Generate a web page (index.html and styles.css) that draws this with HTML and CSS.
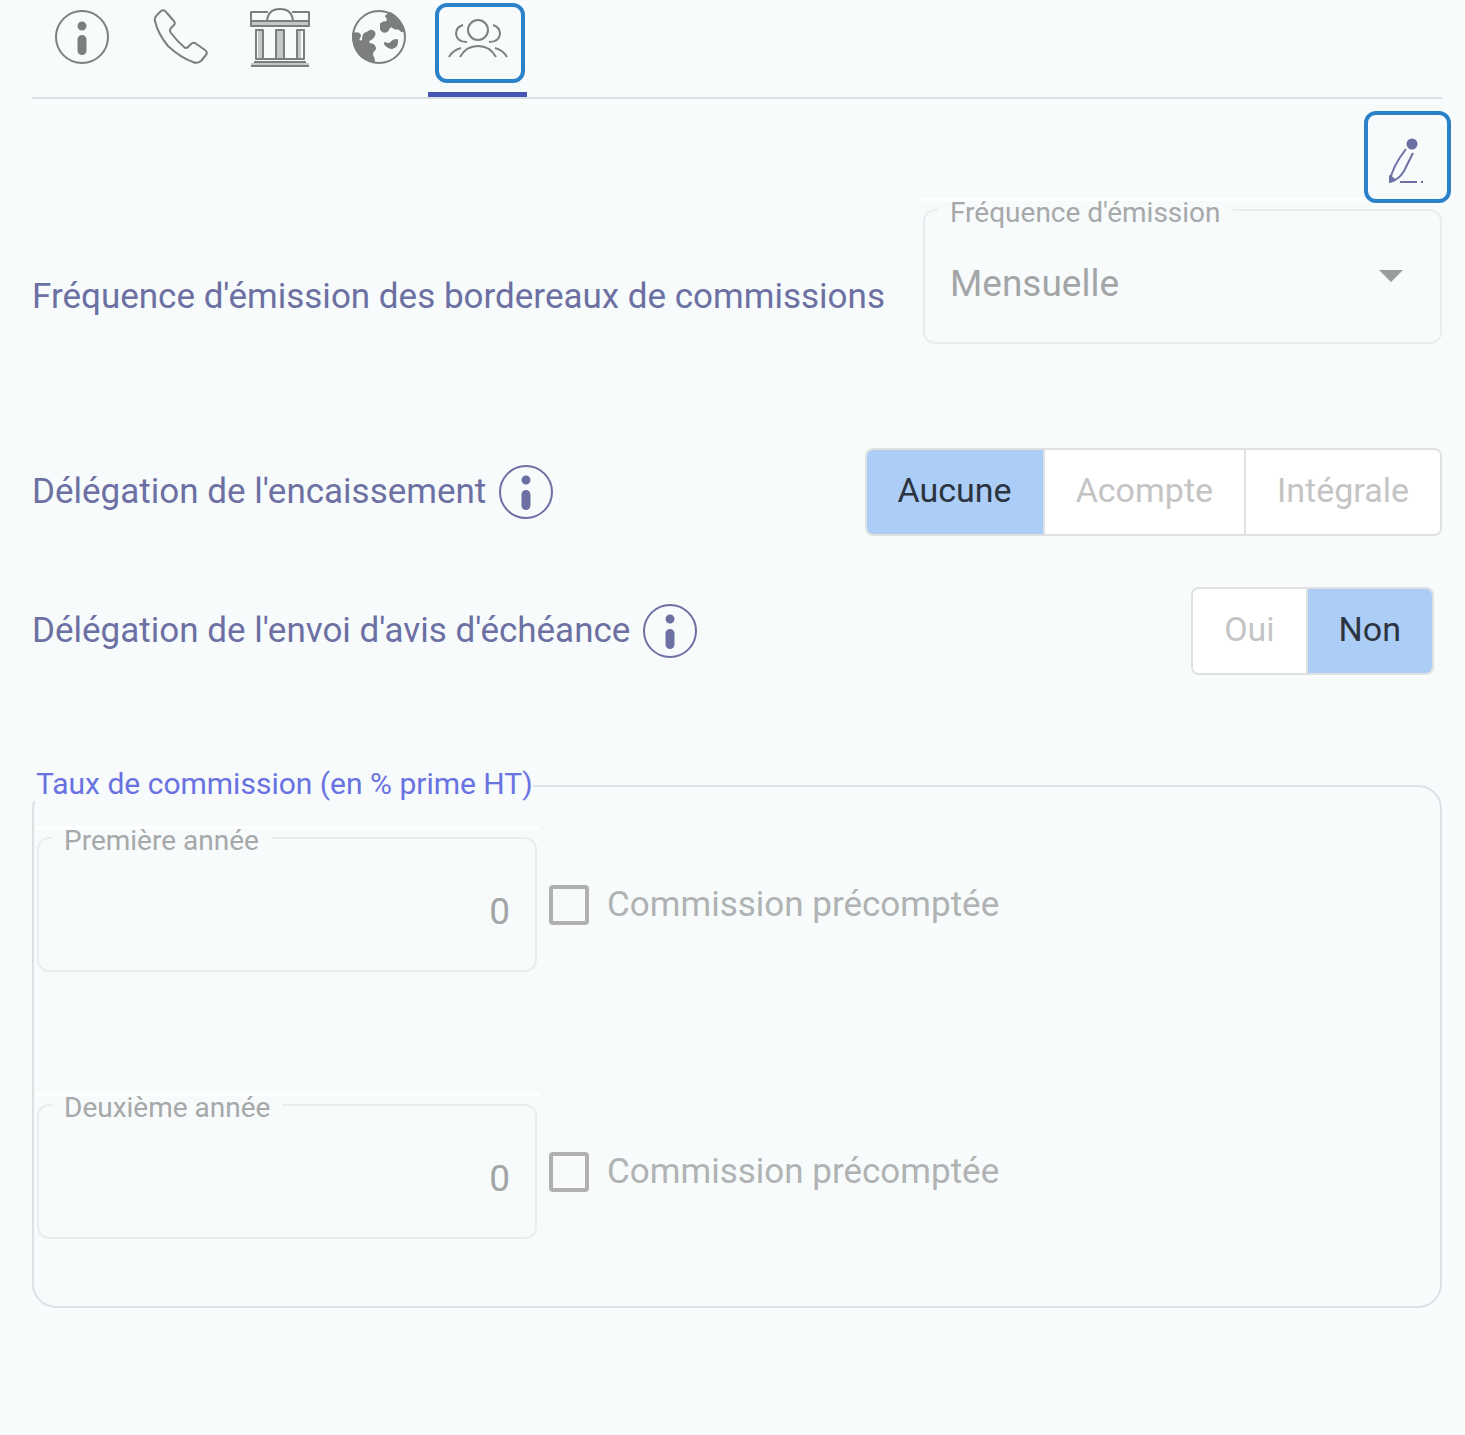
FILE: index.html
```html
<!DOCTYPE html>
<html lang="fr">
<head>
    <meta charset="UTF-8">
    <meta name="viewport" content="width=device-width, initial-scale=1.0">
    <title>Commissions</title>
    <link rel="stylesheet" href="styles.css">
</head>
<body>

    <nav class="tabs">
        <button class="tab" aria-label="Informations">
            <svg class="icon" viewBox="0 0 60 60">
                <circle cx="30" cy="29" r="26"/>
                <circle class="fill" cx="30" cy="18" r="3.5"/>
                <rect class="fill" x="26.5" y="28" width="7" height="18" rx="3.5"/>
            </svg>
        </button>
        <button class="tab" aria-label="Téléphone">
            <svg class="icon" viewBox="0 0 60 60">
                <path d="M4 13Q3 10 6 7L10 3Q13 1 15 4L22 12Q25 15 23 17L20 20Q18 22 20 25Q26 33 33 39Q35 41 37 39L40 36Q42 34 44 35L54 42Q57 44 55 47L50 53Q46 56 42 54Q30 50 17 38Q7 26 4 13Z"/>
            </svg>
        </button>
        <button class="tab" aria-label="Banque">
            <svg class="icon" viewBox="0 0 60 60">
                <path class="shade" d="M8 22h5v29H8zM26 22h8v29h-8zM46 22h5v29h-5zM1 13h58v5H1zM1 55h58v3H1z"/>
                <path d="M18 4H1V18H59V4H42M1 13H59M17 13Q18 1 30 1T43 13M6 22H13V51H6ZM26 22H34V51H26ZM47 22H54V51H47ZM6 51H54M4 54H56M1 58H59"/>
            </svg>
        </button>
        <button class="tab" aria-label="Pays">
            <svg class="icon" viewBox="0 0 60 60">
                <circle cx="30" cy="29" r="26"/>
                <path class="fill" d="M41 5Q51 10 55 23Q52 24 50 20Q47 22 42 18Q40 19 38 23Q34 25 32 21V16Q34 14 38 14Q40 11 37 8ZM36 35Q39 37 42 35Q44 32 48 32Q49 39 43 40Q39 40 36 36ZM4 26Q9 24 11 27Q11 29 9 32Q12 35 14 32Q14 25 18 25Q22 21 25 24Q27 27 22 31Q18 32 20 36Q26 36 26 41Q21 46 24 49Q25 52 25 54Q6 51 4 29Z"/>
            </svg>
        </button>
        <button class="tab active" aria-label="Commissions">
            <svg class="icon" viewBox="0 0 60 60">
                <circle cx="30" cy="22" r="10"/>
                <path d="M12 49Q18 38 30 38T48 49M1 49Q5 42 13 40M59 49Q55 42 47 40M15 17Q8 19 8 26Q9 34 19 34M45 17Q52 19 52 26Q51 34 41 34"/>
            </svg>
        </button>
    </nav>

    <main class="panel">
        <div class="toolbar">
            <button class="edit" aria-label="Modifier">
                <svg viewBox="0 0 48 56">
                    <circle class="fill" cx="28" cy="15" r="4.5"/>
                    <path d="M22 20Q8 38 6 52Q14 52 20 42L29 24M16 53H33M37 53H39"/>
                    <path class="fill" d="M6 47L11 51L6 53Z"/>
                </svg>
            </button>
        </div>

        <div class="row first">
            <span class="text">Fréquence d'émission des bordereaux de commissions</span>
            <fieldset class="field frequency">
                <legend><label for="frequence">Fréquence d'émission</label></legend>
                <select id="frequence" disabled>
                    <option>Mensuelle</option>
                </select>
            </fieldset>
        </div>

        <div class="row collection">
            <span class="text">Délégation de l'encaissement
                <svg class="icon" viewBox="0 0 60 60">
                    <circle cx="30" cy="30" r="26"/>
                    <circle class="fill" cx="30" cy="18" r="3.5"/>
                    <rect class="fill" x="26.5" y="29" width="7" height="18" rx="3.5"/>
                </svg>
            </span>
            <div class="toggle">
                <button class="selected" disabled>Aucune</button>
                <button disabled>Acompte</button>
                <button disabled>Intégrale</button>
            </div>
        </div>

        <div class="row notice">
            <span class="text">Délégation de l'envoi d'avis d'échéance
                <svg class="icon" viewBox="0 0 60 60">
                    <circle cx="30" cy="30" r="26"/>
                    <circle class="fill" cx="30" cy="18" r="3.5"/>
                    <rect class="fill" x="26.5" y="29" width="7" height="18" rx="3.5"/>
                </svg>
            </span>
            <div class="toggle">
                <button disabled>Oui</button>
                <button class="selected" disabled>Non</button>
            </div>
        </div>

        <fieldset class="rates">
            <legend>Taux de commission (en % prime HT)</legend>
            <div class="rate">
                <fieldset class="field">
                    <legend><label for="annee1">Première année</label></legend>
                    <input type="text" id="annee1" value="0" disabled>
                </fieldset>
                <label class="check"><input type="checkbox" disabled>Commission précomptée</label>
            </div>
            <div class="rate">
                <fieldset class="field">
                    <legend><label for="annee2">Deuxième année</label></legend>
                    <input type="text" id="annee2" value="0" disabled>
                </fieldset>
                <label class="check"><input type="checkbox" disabled>Commission précomptée</label>
            </div>
        </fieldset>
    </main>

</body>
</html>
```
FILE: styles.css
```css
*,
*::before,
*::after {
    box-sizing: border-box;
}

body {
    font-family: Roboto, 'Liberation Sans', sans-serif;
    margin: 0;
    padding: 0 23px 0 32px;
    background-color: #f7fbfc;
    color: #6c70a2;
}

button,
input,
select {
    font-family: inherit;
    margin: 0;
}

fieldset {
    margin: 0;
    padding: 0;
    min-width: 0;
}

svg {
    display: block;
    fill: none;
    stroke: currentColor;
    stroke-width: 2;
    stroke-linejoin: round;
}

svg .fill {
    fill: currentColor;
}

svg .shade {
    fill: #c4c7c8;
    stroke: none;
}

.icon {
    width: 60px;
    height: 60px;
    flex: none;
}

/* tabs */
.tabs {
    display: flex;
    border-bottom: 2px solid #dcdfe1;
}

.tab {
    position: relative;
    width: 99px;
    height: 97px;
    padding: 8px 0 24px;
    border: 0;
    border-bottom: 5px solid transparent;
    background: none;
    color: #7c7e7f;
}

.tab .icon {
    margin: 0 auto;
}

.tab.active {
    border-bottom-color: #4453b6;
}

.tab.active::after {
    content: "";
    position: absolute;
    top: 3px;
    left: 7px;
    width: 90px;
    height: 80px;
    border: 4px solid #2c82c9;
    border-radius: 12px;
}

.toolbar {
    display: flex;
    justify-content: flex-end;
    padding-top: 12px;
    margin-right: -9px;
}

.edit {
    position: relative;
    z-index: 1;
    width: 87px;
    height: 92px;
    padding: 0;
    border: 4px solid #2c82c9;
    border-radius: 12px;
    background-color: #f7fbfc;
    color: #6c70a2;
}

.edit svg {
    width: 48px;
    height: 56px;
    margin: 0 auto;
}

/* rows */
.row {
    display: flex;
    justify-content: space-between;
    align-items: center;
}

.row.first {
    align-items: flex-end;
    margin-top: -11px;
}

.row.first .text {
    padding-bottom: 27px;
}

.row.collection {
    margin-top: 104px;
}

.row.notice {
    margin-top: 51px;
    padding-right: 8px;
}

.text {
    display: flex;
    align-items: center;
    gap: 10px;
    font-size: 35px;
    line-height: 40px;
}

.toggle {
    display: flex;
    border: 2px solid #dfe0e1;
    border-radius: 8px;
    overflow: hidden;
}

.toggle button {
    height: 84px;
    padding: 0 31px 4px;
    border: 0;
    background-color: #fff;
    color: #c4c4c4;
    font-size: 34px;
}

.toggle button + button {
    border-left: 2px solid #dfe0e1;
}

.toggle .selected {
    background-color: #accdf6;
    color: #2b3440;
}

/* outlined fields */
.field {
    position: relative;
    width: 500px;
    border: 2px solid #e9edee;
    border-radius: 12px;
}

.field.frequency {
    width: 519px;
}

.field::before {
    content: "";
    position: absolute;
    top: -30px;
    left: -4px;
    right: -4px;
    height: 3px;
    background-color: #fff;
}

.field legend {
    margin-left: 13px;
    padding: 6px 12px 0;
    color: #a6a8a9;
    font-size: 28px;
    line-height: 30px;
}

.field legend label {
    display: block;
}

.field select,
.field > input {
    display: block;
    width: 100%;
    height: 114px;
    padding: 0 25px 4px;
    border: 0;
    background: none;
    color: #a3a5a6;
    font-size: 37px;
    opacity: 1;
    appearance: none;
}

.field > input {
    text-align: right;
}

.frequency::after {
    content: "";
    position: absolute;
    top: 42px;
    right: 37px;
    border: 12px solid transparent;
    border-top-color: #999b9c;
    border-bottom: 0;
}

/* commission rates */
.rates {
    margin-top: 96px;
    padding: 19px 3px 67px;
    border: 2px solid #dde1e4;
    border-radius: 24px;
}

.rates > legend {
    margin-left: -5px;
    padding: 0 0 4px 4px;
    color: #6972e0;
    font-size: 30px;
    line-height: 26px;
}

.rate {
    display: flex;
    align-items: center;
    gap: 12px;
}

.rate + .rate {
    margin-top: 115px;
}

.check {
    display: flex;
    align-items: center;
    gap: 18px;
    padding-top: 18px;
    color: #b0b2b3;
    font-size: 35px;
    line-height: 40px;
}

.check input {
    width: 40px;
    height: 40px;
    margin: 0;
    border: 4px solid #b0b0b0;
    border-radius: 4px;
    appearance: none;
}
```
